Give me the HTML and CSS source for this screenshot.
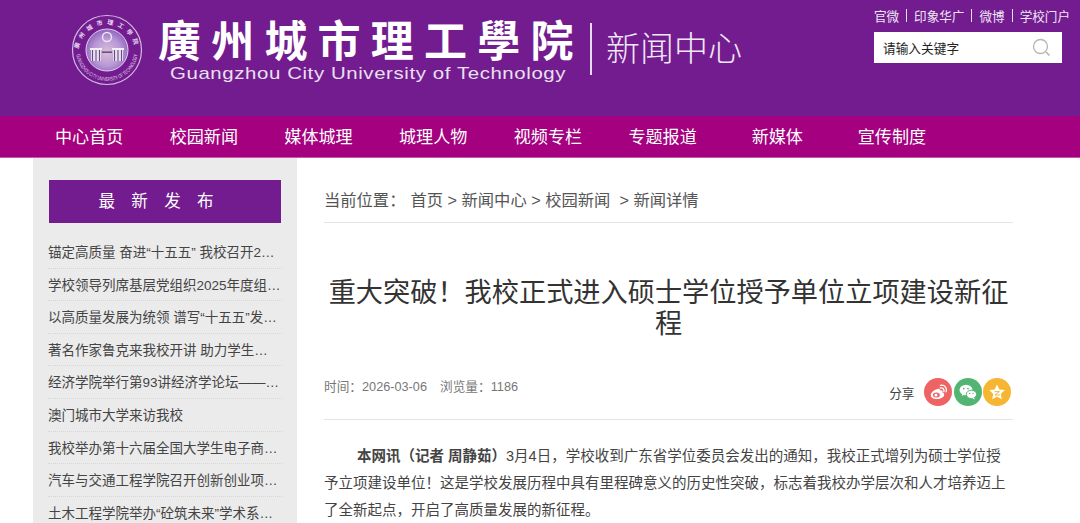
FILE: index.html
```html
<!DOCTYPE html>
<html lang="zh-CN">
<head>
    <meta charset="UTF-8">
    <meta name="viewport" content="width=device-width, initial-scale=1.0">
    <title>广州城市理工学院 新闻中心</title>
    <link rel="stylesheet" href="styles.css">
</head>
<body>

    <!-- Header -->
    <div class="header">
        <div class="brand">
            <svg class="logo" width="72" height="72" viewBox="0 0 72 72">
                <defs>
                    <radialGradient id="seal" cx="0.5" cy="0.55" r="0.55">
                        <stop offset="0" stop-color="#d9c0d8"/>
                        <stop offset="0.6" stop-color="#b898d6"/>
                        <stop offset="1" stop-color="#8f62bb"/>
                    </radialGradient>
                    <path id="rim-top" d="M7.5 39 A28.5 28.5 0 0 1 64.5 39"/>
                    <path id="rim-bottom" d="M5 36 A31 31 0 0 0 67 36"/>
                </defs>
                <circle cx="36" cy="36" r="34.5" fill="none" stroke="#d3bce2" stroke-width="1.2"/>
                <circle cx="36" cy="36" r="21" fill="url(#seal)" stroke="#e0d2ec" stroke-width="1"/>
                <text class="logo-rim-cn"><textPath href="#rim-top" startOffset="50%" text-anchor="middle">廣州城市理工學院</textPath></text>
                <text class="logo-rim-en"><textPath href="#rim-bottom" startOffset="50%" text-anchor="middle" textLength="88" lengthAdjust="spacingAndGlyphs">GUANGZHOU CITY UNIVERSITY OF TECHNOLOGY</textPath></text>
                <path d="M20 36h10v11H20zM42 36h10v11H42z" fill="#e9dff0"/>
                <path d="M21.5 36v11M25 36v11M28.5 36v11M43.5 36v11M47 36v11M50.5 36v11" stroke="#6a4a86" stroke-width="1.1"/>
                <path d="M19 34h12v2H19zM41 34h12v2H41z" fill="#f4eef7"/>
                <path d="M31 37.5h10v1.3H31z" fill="#4d3a5e"/>
                <circle cx="36" cy="23" r="4.5" fill="none" stroke="#efe6f5" stroke-width="1.4"/>
            </svg>
            <div class="brand-name">
                <div class="brand-cn">廣州城市理工學院</div>
                <div class="brand-en">Guangzhou City University of Technology</div>
            </div>
            <div class="brand-divider"></div>
            <div class="brand-sub">新闻中心</div>
        </div>
        <div class="header-right">
            <div class="top-links">
                <a>官微</a><span class="sep"></span><a>印象华广</a><span class="sep"></span><a>微博</a><span class="sep"></span><a>学校门户</a>
            </div>
            <div class="search-box">
                <span>请输入关键字</span>
                <svg width="20" height="20" viewBox="0 0 20 20" fill="none" stroke="#b5b5b5">
                    <circle cx="8.5" cy="8.5" r="7" stroke-width="1.3"/>
                    <path d="M14 14l3.5 3.5" stroke-width="1.6"/>
                </svg>
            </div>
        </div>
    </div>

    <!-- Nav -->
    <div class="nav">
        <a>中心首页</a>
        <a>校园新闻</a>
        <a>媒体城理</a>
        <a>城理人物</a>
        <a>视频专栏</a>
        <a>专题报道</a>
        <a>新媒体</a>
        <a>宣传制度</a>
    </div>

    <div class="page">
        <!-- Sidebar -->
        <div class="sidebar">
            <div class="sidebar-title">最 新 发 布</div>
            <ul class="news-list">
                <li>锚定高质量 奋进“十五五” 我校召开2…</li>
                <li>学校领导列席基层党组织2025年度组…</li>
                <li>以高质量发展为统领 谱写“十五五”发…</li>
                <li>著名作家鲁克来我校开讲 助力学生…</li>
                <li>经济学院举行第93讲经济学论坛——…</li>
                <li>澳门城市大学来访我校</li>
                <li>我校举办第十六届全国大学生电子商…</li>
                <li>汽车与交通工程学院召开创新创业项…</li>
                <li>土木工程学院举办“砼筑未来”学术系…</li>
            </ul>
        </div>

        <!-- Article -->
        <div class="main">
            <div class="breadcrumb">
                <span class="crumb-label">当前位置&#xFF1A;</span>
                <span>首页 &gt; 新闻中心 &gt; 校园新闻 &nbsp;&gt; 新闻详情</span>
            </div>
            <h1 class="article-title">重大突破&#xFF01;我校正式进入硕士学位授予单位立项建设新征程</h1>
            <div class="article-meta">
                <div class="meta-info">
                    <span>时间&#xFF1A;2026-03-06</span>
                    <span>浏览量&#xFF1A;1186</span>
                </div>
                <div class="share">
                    <span class="share-label">分享</span>
                    <span class="share-icon weibo">
                        <svg width="20" height="20" viewBox="0 0 20 20">
                            <path d="M8.6 7.3c2.2-1 3.4-.7 3.2 1.3 2-.8 3.6.3 2.6 2 1.2.4 1.8 1.2 1.8 2.1 0 2.3-3.3 4.3-7.2 4.3-3.5 0-6.2-1.5-6.2-3.8 0-2.1 2.6-4.8 5.8-5.9z" fill="#fff"/>
                            <ellipse cx="8.4" cy="13" rx="3.5" ry="2.5" fill="#ee6464"/>
                            <circle cx="8" cy="13.2" r="1.4" fill="#fff"/>
                            <path d="M12.3 6c2.3-.6 4.3 1.4 3.6 3.7M12.5 3.3c4-.8 7 2.8 5.7 6.6" fill="none" stroke="#fff" stroke-width="1.3" stroke-linecap="round"/>
                        </svg>
                    </span>
                    <span class="share-icon wechat">
                        <svg width="20" height="20" viewBox="0 0 20 20">
                            <ellipse cx="8" cy="8" rx="6.5" ry="5.2" fill="#fff"/>
                            <path d="M4.5 11.5l-.8 2.6 3-1.6z" fill="#fff"/>
                            <ellipse cx="13.4" cy="12.4" rx="5.2" ry="4.2" fill="#fff" stroke="#52b574" stroke-width="1"/>
                            <path d="M16 15.5l.8 2-2.6-1.2z" fill="#fff"/>
                            <circle cx="5.8" cy="6.6" r=".9" fill="#52b574"/>
                            <circle cx="10" cy="6.6" r=".9" fill="#52b574"/>
                            <circle cx="11.6" cy="11.4" r=".7" fill="#52b574"/>
                            <circle cx="15" cy="11.4" r=".7" fill="#52b574"/>
                        </svg>
                    </span>
                    <span class="share-icon star">
                        <svg width="20" height="20" viewBox="0 0 20 20">
                            <path d="M10 2.4l2.4 5 5.4.7-4 3.8 1 5.4-4.8-2.7-4.8 2.7 1-5.4-4-3.8 5.4-.7z" fill="#fff"/>
                            <path d="M7.6 9.6h4.8l-4.4 3.4h4.8" fill="none" stroke="#f6b632" stroke-width="1"/>
                        </svg>
                    </span>
                </div>
            </div>
            <div class="article-body">
                <p><strong>本网讯&#xFF08;记者 周静茹&#xFF09;</strong>3月4日&#xFF0C;学校收到广东省学位委员会发出的通知&#xFF0C;我校正式增列为硕士学位授予立项建设单位&#xFF01;这是学校发展历程中具有里程碑意义的历史性突破&#xFF0C;标志着我校办学层次和人才培养迈上了全新起点&#xFF0C;开启了高质量发展的新征程&#x3002;</p>
            </div>
        </div>
    </div>

</body>
</html>
```

FILE: styles.css
```css
html, body {
    margin: 0;
    padding: 0;
    height: 523px;
    overflow: hidden;
}

body {
    font-family: "Liberation Sans", "Noto Sans CJK SC", sans-serif;
    background-color: #ffffff;
    color: #333;
}

/* header */
.header {
    height: 116px;
    background-color: #721c8f;
    display: flex;
    justify-content: space-between;
    box-sizing: border-box;
    padding: 0 18px 0 71px;
    color: #fff;
}

.brand {
    display: flex;
    align-items: flex-start;
    padding-top: 14px;
}

.logo-rim-cn {
    font-family: "Noto Sans CJK TC", sans-serif;
    font-size: 6px;
    font-weight: 700;
    fill: #e6d9ef;
    letter-spacing: 4.2px;
}

.logo-rim-en {
    font-size: 5.5px;
    fill: #e0d2ec;
}

.brand-name {
    margin-left: 15px;
    width: 432px;
}

.brand-cn {
    font-family: "Noto Sans CJK TC", sans-serif;
    font-size: 43px;
    font-weight: 700;
    line-height: 50px;
    letter-spacing: 10.2px;
    white-space: nowrap;
    margin-top: -1px;
}

.brand-en {
    font-size: 17px;
    line-height: 20px;
    margin: 1px 0 0 12px;
    letter-spacing: 0.5px;
    color: #e9e0f0;
    white-space: nowrap;
    transform: scaleX(1.2);
    transform-origin: left center;
}

.brand-divider {
    width: 2px;
    height: 52px;
    margin: 9px 0 0 0;
    background-color: #e6dcee;
}

.brand-sub {
    margin: 11px 0 0 14px;
    font-family: "Noto Sans CJK SC", sans-serif;
    font-size: 34px;
    font-weight: 300;
    line-height: 44px;
    color: #f0e8f5;
    white-space: nowrap;
}

.header-right {
    display: flex;
    flex-direction: column;
    align-items: flex-end;
}

.top-links {
    display: flex;
    align-items: center;
    height: 18px;
    margin: 6px -8px 0 0;
    font-size: 12.6px;
    color: #efe6f5;
}

.top-links .sep {
    width: 1px;
    height: 13px;
    margin: 0 7px;
    background-color: #e6dcee;
}

.search-box {
    width: 188px;
    height: 31px;
    margin-top: 8px;
    box-sizing: border-box;
    padding: 0 10px 0 9px;
    background-color: #fff;
    display: flex;
    justify-content: space-between;
    align-items: center;
    font-size: 12.7px;
    color: #222;
}

/* nav */
.nav {
    height: 41px;
    background-color: #a4007f;
    border-bottom: 1px solid #c55aa8;
    display: flex;
    padding-left: 31.8px;
    color: #fff;
}

.nav a {
    width: 114.7px;
    font-size: 17.1px;
    line-height: 43px;
    text-align: center;
    white-space: nowrap;
}

/* page */
.page {
    display: flex;
    padding-left: 33px;
}

.sidebar {
    width: 264px;
    height: 365px;
    flex-shrink: 0;
    box-sizing: border-box;
    padding: 22px 15px 0 15px;
    background-color: #ebebeb;
}

.sidebar-title {
    width: 232px;
    height: 43px;
    margin-left: 1px;
    box-sizing: border-box;
    padding-right: 14px;
    background-color: #721c8f;
    color: #fff;
    text-align: center;
    font-size: 16.5px;
    line-height: 42px;
    letter-spacing: 4px;
    word-spacing: 3.7px;
}

.news-list {
    list-style: none;
    margin: 13px 0 0 0;
    padding: 0;
}

.news-list li {
    height: 32.6px;
    box-sizing: border-box;
    padding-top: 2px;
    border-bottom: 1px dotted #d6d6d6;
    font-size: 13.5px;
    line-height: 30px;
    color: #444;
    white-space: nowrap;
}

/* article */
.main {
    width: 689px;
    margin-left: 27px;
}

.breadcrumb {
    height: 65px;
    box-sizing: border-box;
    padding-top: 29px;
    border-bottom: 1px solid #e4e4e4;
    font-size: 16.3px;
    line-height: 27px;
    color: #555;
    display: flex;
    gap: 5px;
}

.article-title {
    margin: 54px 0 0 0;
    font-size: 27.2px;
    font-weight: 400;
    line-height: 31px;
    text-align: center;
    color: #333;
}

.article-meta {
    height: 65px;
    margin-top: 16px;
    box-sizing: border-box;
    border-bottom: 1px solid #e4e4e4;
    display: flex;
    justify-content: space-between;
    font-size: 12.7px;
    color: #777;
}

.meta-info {
    display: flex;
    gap: 13px;
    line-height: 20px;
    padding-top: 22px;
}

.share {
    display: flex;
    align-items: center;
    align-self: flex-start;
    padding: 23px 2px 0 0;
    gap: 1.5px;
}

.share-label {
    color: #444;
    margin-right: 8px;
}

.share-icon {
    width: 28px;
    height: 28px;
    border-radius: 50%;
    display: flex;
    align-items: center;
    justify-content: center;
}

.weibo { background-color: #ee6464; }
.wechat { background-color: #52b574; }
.star { background-color: #f6b632; }

.article-body p {
    margin: 23px 0 0 0;
    font-size: 14.5px;
    line-height: 27px;
    text-indent: 33px;
    color: #444;
}

.article-body strong {
    font-weight: 700;
}
```
